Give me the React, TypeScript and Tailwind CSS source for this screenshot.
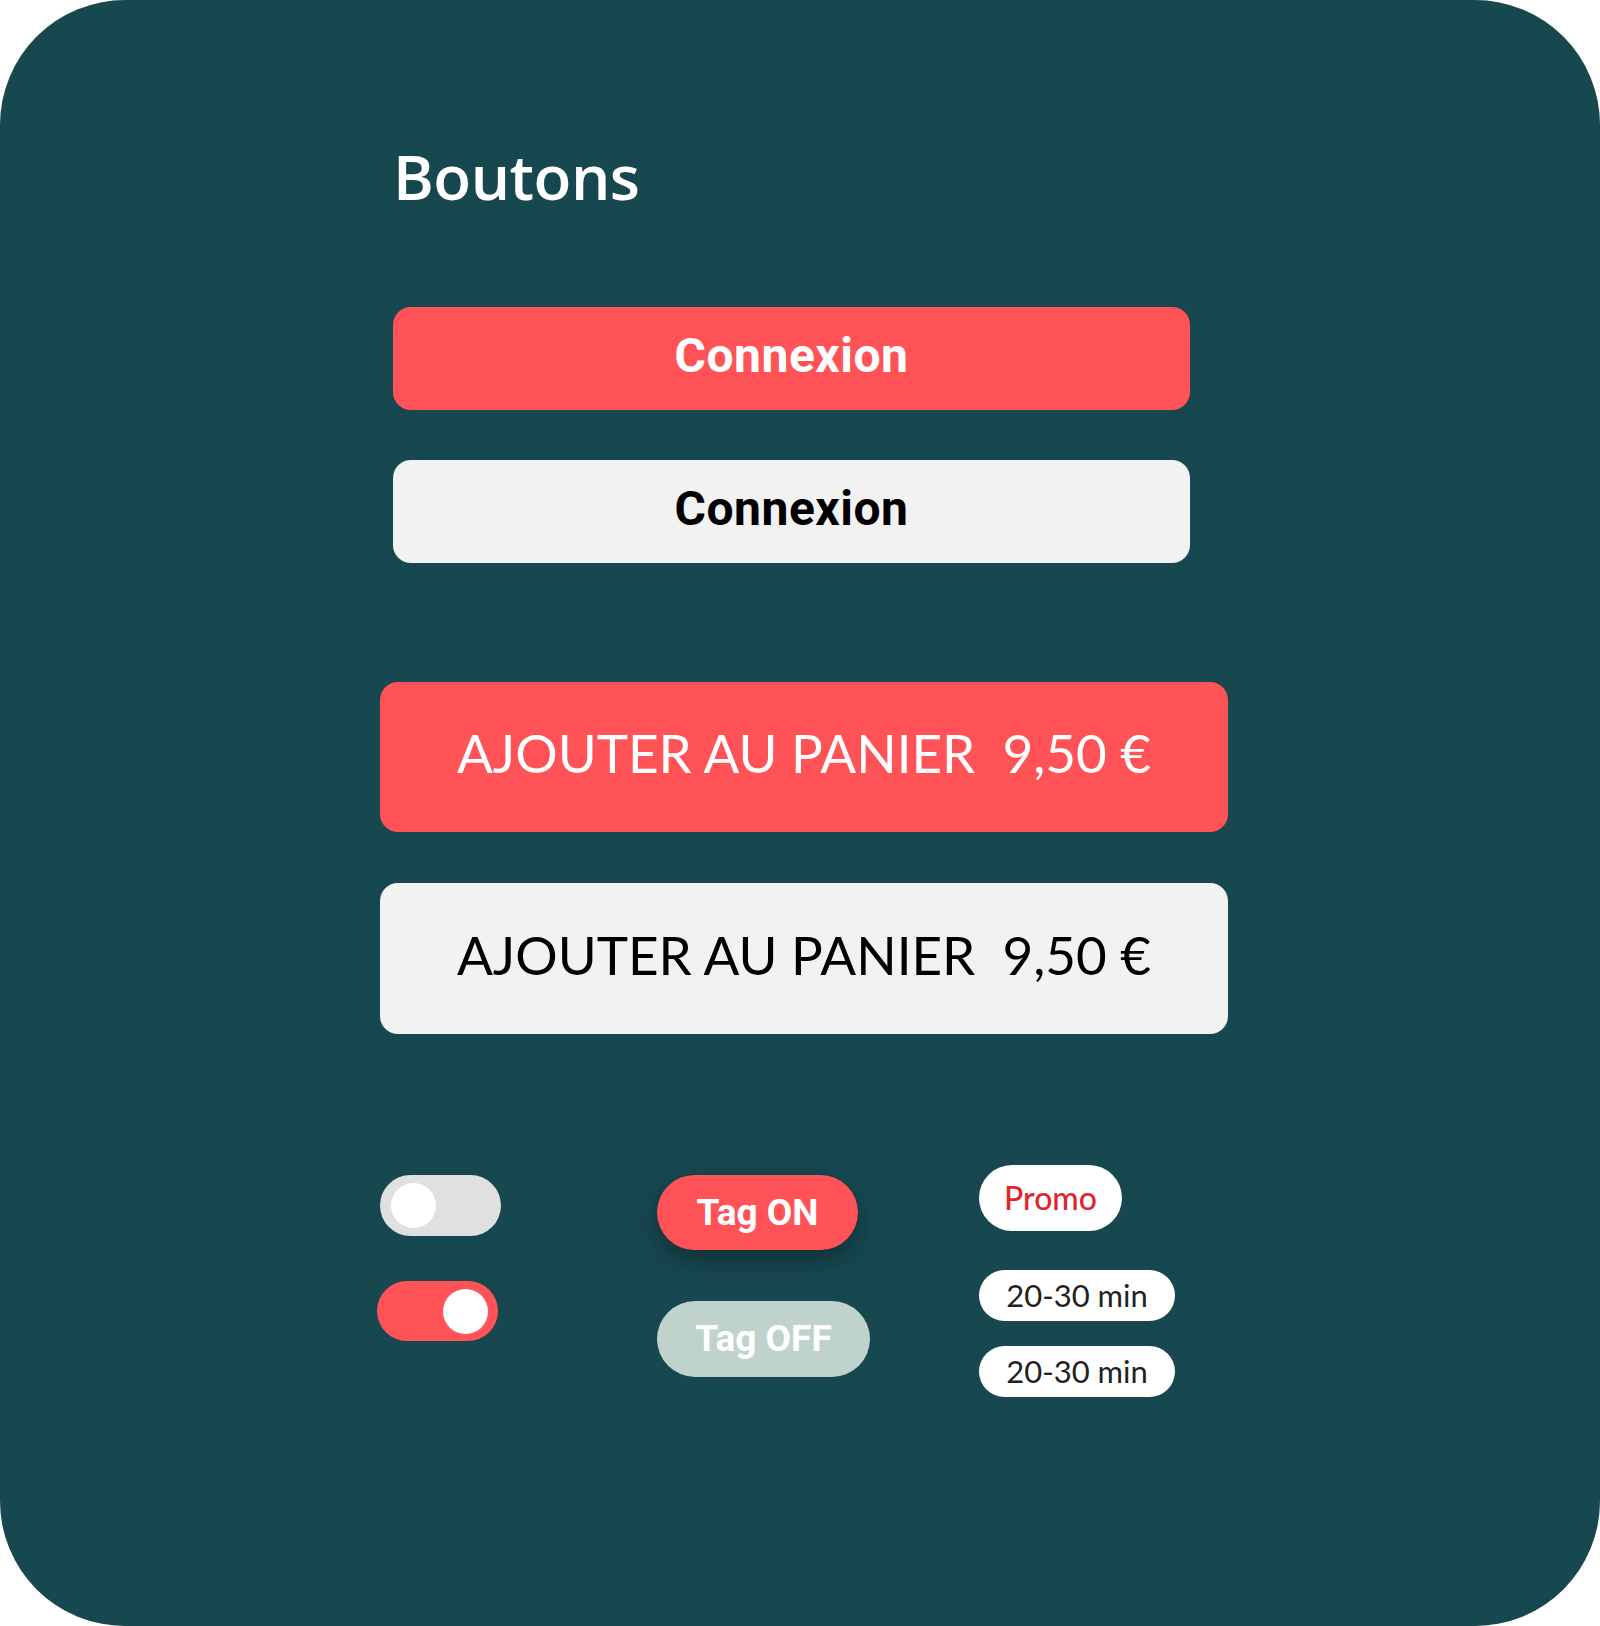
export default function App() {
  return (
    <div className="w-[1600px] h-[1626px] bg-white">
      <div className="w-full h-full rounded-[125px] bg-[#17474f] flex flex-col pl-[380px] pt-[136px]">
        <h1 className="ml-[13px] text-[62px] leading-[80px] font-semibold text-white font-['Open_Sans',sans-serif] tracking-[-0.5px]">
          Boutons
        </h1>

        <div className="ml-[13px] mt-[91px] flex flex-col gap-[50px] w-[797px]">
          <button className="h-[103px] rounded-[18px] bg-[#ff5357] text-white text-[48px] font-bold font-['Roboto',sans-serif] tracking-[0.5px] pb-[6px]">
            Connexion
          </button>
          <button className="h-[103px] rounded-[18px] bg-[#f2f2f2] text-black text-[48px] font-bold font-['Roboto',sans-serif] tracking-[0.5px] pb-[6px]">
            Connexion
          </button>
        </div>

        <div className="mt-[119px] flex flex-col gap-[51px] w-[848px]">
          <button className="h-[150px] rounded-[18px] bg-[#ff5357] text-white text-[53px] font-['Lato',sans-serif] pb-[8px] whitespace-pre">
            AJOUTER AU PANIER  9,50 €
          </button>
          <button className="h-[151px] rounded-[18px] bg-[#f2f2f2] text-black text-[53px] font-['Lato',sans-serif] pb-[8px] whitespace-pre">
            AJOUTER AU PANIER  9,50 €
          </button>
        </div>

        <div className="mt-[141px] flex">
          <div className="w-[277px] flex flex-col">
            <div className="w-[121px] h-[61px] rounded-full bg-[#e0e0e0] flex items-center pl-[11px]">
              <div className="w-[45px] h-[45px] rounded-full bg-white" />
            </div>
            <div className="-ml-[3px] mt-[45px] w-[121px] h-[60px] rounded-full bg-[#ff5357] flex items-center justify-end pr-[10px]">
              <div className="w-[45px] h-[45px] rounded-full bg-white" />
            </div>
          </div>

          <div className="w-[322px] flex flex-col items-start font-['Roboto',sans-serif] font-bold text-white text-[37px]">
            <div className="w-[201px] h-[75px] rounded-full bg-[#ff5357] flex items-center justify-center shadow-[0_10px_22px_rgba(0,0,0,0.3)]">
              Tag ON
            </div>
            <div className="mt-[51px] w-[213px] h-[76px] rounded-full bg-[#bfd3cc] flex items-center justify-center">
              Tag OFF
            </div>
          </div>

          <div className="-mt-[10px] flex flex-col items-start font-['Lato',sans-serif]">
            <div className="w-[143px] h-[66px] rounded-full bg-white flex items-center justify-center text-[#e0242b] text-[32px] font-medium">
              Promo
            </div>
            <div className="mt-[39px] w-[196px] h-[51px] rounded-full bg-white flex items-center justify-center text-[#222] text-[31px]">
              20-30 min
            </div>
            <div className="mt-[25px] w-[196px] h-[51px] rounded-full bg-white flex items-center justify-center text-[#222] text-[31px]">
              20-30 min
            </div>
          </div>
        </div>
      </div>
    </div>
  )
}
